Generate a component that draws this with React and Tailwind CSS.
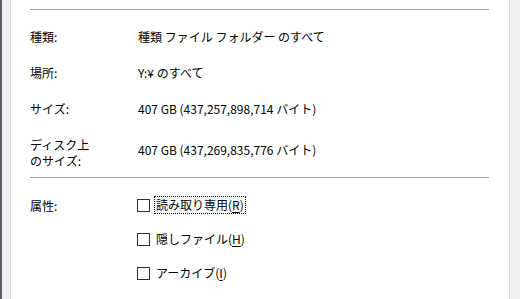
export default function App() {
  const font = { fontFamily: '"Noto Sans CJK JP", "Noto Sans", sans-serif' };

  const Checkbox = ({ text, accel, focused }) => (
    <div className="flex items-center h-[20px]">
      <div className="w-[13px] h-[13px] border border-[#333333] bg-white shrink-0" />
      <span
        className={`ml-[5px] px-[1px] leading-[16px] ${
          focused ? "outline-1 outline-dotted outline-black" : ""
        }`}
      >
        {text}(<span className="underline underline-offset-2">{accel}</span>)
      </span>
    </div>
  );

  return (
    <div
      className="w-[520px] h-[299px] flex bg-[#f0f0f0] text-[12px] text-black overflow-hidden"
      style={font}
    >
      {/* left window edge */}
      <div className="w-[2px] bg-[#5b6068]" />
      <div className="w-[8px] bg-[#f0f0f0]" />

      {/* property page */}
      <div className="flex-1 bg-white border-x border-[#d9d9d9] pl-[19px] pr-[20px] pt-[9px]">
        <div className="h-px bg-[#a0a0a0]" />

        <div className="mt-[19px] flex leading-[16px]">
          <div className="w-[108px]">種類:</div>
          <div>種類 ファイル フォルダー のすべて</div>
        </div>

        <div className="mt-[20px] flex leading-[16px]">
          <div className="w-[108px]">場所:</div>
          <div>Y:¥ のすべて</div>
        </div>

        <div className="mt-[20px] flex leading-[16px]">
          <div className="w-[108px]">サイズ:</div>
          <div>407 GB (437,257,898,714 バイト)</div>
        </div>

        <div className="mt-[20px] flex leading-[16px]">
          <div className="w-[108px]">
            ディスク上
            <br />
            のサイズ:
          </div>
          <div className="mt-[5px]">407 GB (437,269,835,776 バイト)</div>
        </div>

        <div className="mt-[8px] h-px bg-[#a0a0a0]" />

        <div className="mt-[19px] flex">
          <div className="w-[107px] leading-[16px] mt-[1px]">属性:</div>
          <div className="flex flex-col gap-[14px] -mt-[2px]">
            <Checkbox text="読み取り専用" accel="R" focused />
            <Checkbox text="隠しファイル" accel="H" />
            <Checkbox text="アーカイブ" accel="I" />
          </div>
        </div>
      </div>

      <div className="w-[10px] bg-[#f0f0f0]" />
    </div>
  );
}
